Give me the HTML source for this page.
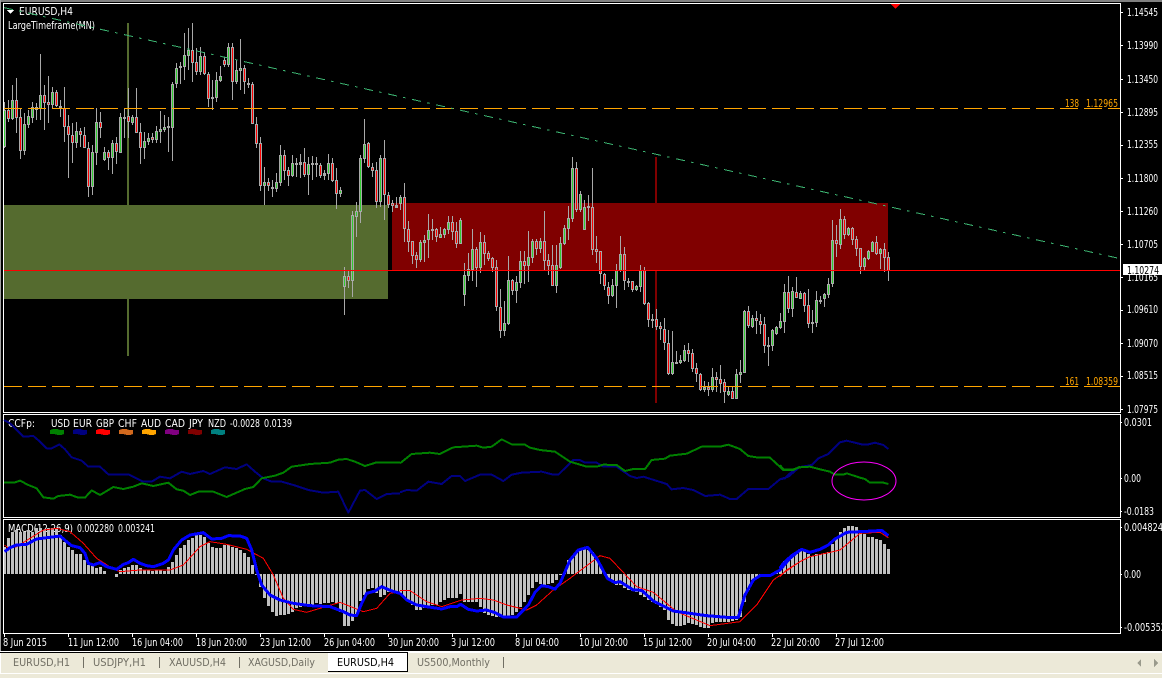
<!DOCTYPE html>
<html><head><meta charset="utf-8"><title>EURUSD,H4</title>
<style>
html,body{margin:0;padding:0;background:#000;width:1162px;height:678px;overflow:hidden}
svg{display:block;position:absolute;left:0;top:0}
text{font-family:"DejaVu Sans","Liberation Sans",sans-serif;font-size:10.5px;fill:#fff}
.o{fill:#FFA500}
.t{fill:#716F64}
.k{fill:#000}
</style></head><body>
<svg width="1162" height="678" viewBox="0 0 1162 678" shape-rendering="crispEdges">
<rect width="1162" height="678" fill="#000"/>
<rect width="1162" height="2" fill="#808080"/>
<rect width="1" height="652" fill="#a0a0a0"/>

<!-- main pane -->
<rect x="4" y="205" width="384" height="94" fill="#556B2F"/>
<rect x="392" y="203" width="496" height="68" fill="#800000"/>
<rect x="127" y="23" width="2" height="333" fill="#556B2F"/>
<rect x="655" y="157" width="2" height="246" fill="#800000"/>
<g id="candles"></g>
<line x1="4" y1="108.5" x2="1120" y2="108.5" stroke="#FFA500" stroke-dasharray="18 6"/>
<line x1="4" y1="386.5" x2="1120" y2="386.5" stroke="#FFA500" stroke-dasharray="18 6"/>
<rect x="4" y="270" width="1116" height="1" fill="#FF0000"/>
<text x="19" y="15" textLength="54" lengthAdjust="spacingAndGlyphs">EURUSD,H4</text>
<text x="8" y="29" textLength="87" lengthAdjust="spacingAndGlyphs">LargeTimeframe(MN)</text>
<polygon points="7,10 14,10 10.5,14" fill="#fff"/>
<line x1="4" y1="7.6" x2="1120" y2="258.6" stroke="#3CB371" stroke-dasharray="9.2 6.1 2.5 6.8"/>
<polygon points="891,4 900,4 895.5,9" fill="#FF0000"/>
<text class="o" x="1065" y="107" textLength="14" lengthAdjust="spacingAndGlyphs">138</text>
<text class="o" x="1086" y="107" textLength="32" lengthAdjust="spacingAndGlyphs">1.12965</text>
<text class="o" x="1065" y="385" textLength="14" lengthAdjust="spacingAndGlyphs">161</text>
<text class="o" x="1086" y="385" textLength="32" lengthAdjust="spacingAndGlyphs">1.08359</text>
<rect x="3.5" y="3.5" width="1117" height="409" fill="none" stroke="#fff"/>

<!-- price axis -->
<path d="M1120 12.5h3M1120 45.5h3M1120 79.5h3M1120 112.5h3M1120 145.5h3M1120 178.5h3M1120 211.5h3M1120 244.5h3M1120 277.5h3M1120 310.5h3M1120 343.5h3M1120 376.5h3M1120 409.5h3" stroke="#fff"/>
<text x="1127" y="16" textLength="31" lengthAdjust="spacingAndGlyphs">1.14545</text>
<text x="1127" y="49" textLength="31" lengthAdjust="spacingAndGlyphs">1.13990</text>
<text x="1127" y="83" textLength="31" lengthAdjust="spacingAndGlyphs">1.13450</text>
<text x="1127" y="116" textLength="31" lengthAdjust="spacingAndGlyphs">1.12895</text>
<text x="1127" y="148" textLength="31" lengthAdjust="spacingAndGlyphs">1.12355</text>
<text x="1127" y="182" textLength="31" lengthAdjust="spacingAndGlyphs">1.11800</text>
<text x="1127" y="215" textLength="31" lengthAdjust="spacingAndGlyphs">1.11260</text>
<text x="1127" y="248" textLength="31" lengthAdjust="spacingAndGlyphs">1.10705</text>
<text x="1127" y="281" textLength="31" lengthAdjust="spacingAndGlyphs">1.10165</text>
<rect x="1123" y="264" width="39" height="11" fill="#fff"/>
<text class="k" x="1127" y="274" textLength="32" lengthAdjust="spacingAndGlyphs">1.10274</text>
<text x="1127" y="313" textLength="31" lengthAdjust="spacingAndGlyphs">1.09610</text>
<text x="1127" y="347" textLength="31" lengthAdjust="spacingAndGlyphs">1.09070</text>
<text x="1127" y="379" textLength="31" lengthAdjust="spacingAndGlyphs">1.08515</text>
<text x="1127" y="413" textLength="31" lengthAdjust="spacingAndGlyphs">1.07975</text>

<!-- CCF pane -->
<rect x="3.5" y="414.5" width="1117" height="103" fill="none" stroke="#fff"/>
<text x="8" y="427" textLength="27" lengthAdjust="spacingAndGlyphs">CCFp:</text>
<text x="51" y="427" textLength="19" lengthAdjust="spacingAndGlyphs">USD</text>
<text x="73" y="427" textLength="19" lengthAdjust="spacingAndGlyphs">EUR</text>
<text x="96" y="427" textLength="18" lengthAdjust="spacingAndGlyphs">GBP</text>
<text x="118" y="427" textLength="19" lengthAdjust="spacingAndGlyphs">CHF</text>
<text x="141" y="427" textLength="20" lengthAdjust="spacingAndGlyphs">AUD</text>
<text x="165" y="427" textLength="20" lengthAdjust="spacingAndGlyphs">CAD</text>
<text x="189" y="427" textLength="14" lengthAdjust="spacingAndGlyphs">JPY</text>
<text x="208" y="427" textLength="18" lengthAdjust="spacingAndGlyphs">NZD</text>
<text x="230" y="427" textLength="30" lengthAdjust="spacingAndGlyphs">-0.0028</text>
<text x="264" y="427" textLength="28" lengthAdjust="spacingAndGlyphs">0.0139</text>
<g stroke="none">
<path d="M50 430l3-1h4l3 1h4v4l-3 1h-3l-4-1h-4z" fill="#008000"/>
<path d="M73 430l3-1h4l3 1h4v4l-3 1h-3l-4-1h-4z" fill="#000080"/>
<path d="M96 430l3-1h4l3 1h4v4l-3 1h-3l-4-1h-4z" fill="#FF0000"/>
<path d="M119 430l3-1h4l3 1h4v4l-3 1h-3l-4-1h-4z" fill="#D2691E"/>
<path d="M142 430l3-1h4l3 1h4v4l-3 1h-3l-4-1h-4z" fill="#FFA500"/>
<path d="M165 430l3-1h4l3 1h4v4l-3 1h-3l-4-1h-4z" fill="#800080"/>
<path d="M188 430l3-1h4l3 1h4v4l-3 1h-3l-4-1h-4z" fill="#800000"/>
<path d="M211 430l3-1h4l3 1h4v4l-3 1h-3l-4-1h-4z" fill="#008080"/>
</g>
<g fill="none" stroke-width="6" stroke-linejoin="round">
<polyline transform="translate(0,410) scale(.33333)" stroke="#000080" points="12,30 30,40 50,60 70,80 100,78 120,95 140,115 155,115 178,103 195,118 215,142 245,152 265,170 300,170 325,193 385,193 430,215 455,215 480,200 510,205 545,185 570,192 610,183 630,192 675,172 710,177 740,163 765,185 790,205 815,215 845,215 880,225 925,240 970,248 1015,245 1045,308 1080,242 1095,240 1130,267 1160,252 1200,250"/>
<polyline transform="translate(400,410) scale(.33333)" stroke="#000080" points="0,247 20,240 50,242 85,215 125,222 155,198 180,198 195,213 240,194 275,194 310,213 335,194 365,188 425,185 460,194 475,194 520,150 540,150 555,158 590,158 610,170 650,170 690,198 710,204 730,200 800,222 815,238 850,234 880,240 915,258 960,254 990,267 1010,267 1045,237 1105,237 1140,208 1165,200 1200,170"/>
<polyline transform="translate(780,410) scale(.33333)" stroke="#000080" points="0,208 15,205 30,190 55,172 95,165 115,145 145,132 180,97 200,92 245,103 265,103 285,98 310,105 325,117"/>
<polyline transform="translate(0,410) scale(.33333)" stroke="#008000" points="12,218 45,217 60,212 85,225 110,235 130,262 160,266 175,258 210,254 235,263 255,263 275,241 300,255 340,231 370,237 400,230 425,220 460,228 505,218 530,238 550,242 570,255 595,245 640,245 680,261 735,237 760,231 785,205 825,197 850,188 875,170 930,162 990,158 1015,149 1040,147 1065,155 1095,168 1130,157 1200,158"/>
<polyline transform="translate(400,410) scale(.33333)" stroke="#008000" points="0,160 35,132 90,128 120,132 160,112 230,107 250,113 275,110 305,88 335,103 375,104 390,113 420,120 465,125 510,155 560,170 590,170 610,164 650,165 675,183 700,177 735,177 755,150 795,146 810,137 860,131 905,110 960,110 985,104 1020,117 1045,138 1075,143 1110,143 1150,180 1180,180 1200,170"/>
<polyline transform="translate(780,410) scale(.33333)" stroke="#008000" points="0,165 10,178 40,178 60,172 90,170 120,178 150,185 165,194 190,194 200,190 240,203 255,207 270,218 310,218 325,222"/>
</g>
<ellipse cx="864" cy="481" rx="32" ry="19" fill="none" stroke="#FF00FF" shape-rendering="auto"/>
<path d="M1120 422.500h2M1120 478.500h2M1120 511.500h2" stroke="#fff"/>
<text x="1124" y="426" textLength="28" lengthAdjust="spacingAndGlyphs">0.0301</text>
<text x="1124" y="482" textLength="17" lengthAdjust="spacingAndGlyphs">0.00</text>
<text x="1124" y="515" textLength="30" lengthAdjust="spacingAndGlyphs">-0.0183</text>

<!-- MACD pane -->
<text x="8" y="532" textLength="65" lengthAdjust="spacingAndGlyphs">MACD(12,26,9)</text>
<text x="77" y="532" textLength="37" lengthAdjust="spacingAndGlyphs">0.002280</text>
<text x="118" y="532" textLength="37" lengthAdjust="spacingAndGlyphs">0.003241</text>
<g id="bars"></g>
<g fill="none" stroke-linejoin="round">
<g stroke="#FF0000" stroke-width="3">
<polyline transform="translate(0,515) scale(.33333)" points="14,90 25,100 50,95 90,70 130,45 170,40 210,50 250,85 290,130 340,162 360,170 420,165 510,165 550,150 600,95 630,80 680,88 740,103 790,130 820,180 850,250 880,283 920,292 960,280 1020,262 1060,278 1090,290 1130,280 1170,235 1200,230"/>
<polyline transform="translate(400,515) scale(.33333)" points="0,227 30,227 80,260 125,275 185,255 240,250 280,255 320,270 380,285 410,270 460,225 510,190 600,122 630,130 710,215 760,232 830,290 930,332 1020,320 1070,270 1120,195 1200,140"/>
<polyline transform="translate(780,515) scale(.33333)" points="0,185 20,165 60,140 90,125 150,112 180,105 240,55 300,52 325,68"/>
</g>
<g stroke="#0000FF" stroke-width="9">
<polyline transform="translate(0,515) scale(.33333)" points="14,110 30,98 50,90 80,88 110,72 140,68 180,63 200,80 215,92 240,98 255,115 265,145 280,150 300,143 320,155 350,163 370,148 385,143 400,133 420,145 440,152 460,155 490,145 505,135 520,105 545,75 570,60 610,53 635,72 665,70 685,62 720,63 740,70 755,105 770,165 785,210 810,240 840,255 880,265 930,272 990,275 1030,290 1050,300 1070,302 1085,265 1100,235 1125,228 1145,215 1175,228 1200,235"/>
<polyline transform="translate(400,515) scale(.33333)" points="0,235 20,255 50,270 80,275 125,282 150,275 170,275 182,268 205,283 230,288 260,285 285,293 310,306 350,306 385,270 405,232 425,212 445,215 465,222 480,205 510,135 535,105 563,97 590,130 622,190 645,203 660,200 700,225 725,226 760,258 820,288 870,295 920,302 980,307 1015,307 1035,240 1060,195 1080,182 1110,182 1140,165 1170,130 1200,105"/>
<polyline transform="translate(780,515) scale(.33333)" points="0,160 10,145 35,122 65,103 90,112 120,103 145,90 165,72 200,52 240,50 280,48 305,46 325,62"/>
</g>
</g>
<rect x="3.5" y="519.5" width="1117" height="114" fill="none" stroke="#fff"/>
<path d="M1120 527.500h2M1120 574.500h2M1120 627.500h2" stroke="#fff"/>
<text x="1124" y="531" textLength="39" lengthAdjust="spacingAndGlyphs">0.004824</text>
<text x="1124" y="578" textLength="17" lengthAdjust="spacingAndGlyphs">0.00</text>
<text x="1124" y="631" textLength="42" lengthAdjust="spacingAndGlyphs">-0.005352</text>

<!-- time axis -->
<path d="M4.500 634v3M68.500 634v3M132.500 634v3M196.500 634v3M260.500 634v3M324.500 634v3M388.500 634v3M452.500 634v3M516.500 634v3M580.500 634v3M644.500 634v3M708.500 634v3M772.500 634v3M836.500 634v3" stroke="#fff"/>
<text x="3" y="646" textLength="44" lengthAdjust="spacingAndGlyphs">8 Jun 2015</text>
<text x="68" y="646" textLength="51" lengthAdjust="spacingAndGlyphs">11 Jun 12:00</text>
<text x="132" y="646" textLength="51" lengthAdjust="spacingAndGlyphs">16 Jun 04:00</text>
<text x="196" y="646" textLength="51" lengthAdjust="spacingAndGlyphs">18 Jun 20:00</text>
<text x="260" y="646" textLength="51" lengthAdjust="spacingAndGlyphs">23 Jun 12:00</text>
<text x="324" y="646" textLength="51" lengthAdjust="spacingAndGlyphs">26 Jun 04:00</text>
<text x="388" y="646" textLength="51" lengthAdjust="spacingAndGlyphs">30 Jun 20:00</text>
<text x="451" y="646" textLength="44" lengthAdjust="spacingAndGlyphs">3 Jul 12:00</text>
<text x="515" y="646" textLength="44" lengthAdjust="spacingAndGlyphs">8 Jul 04:00</text>
<text x="579" y="646" textLength="49" lengthAdjust="spacingAndGlyphs">10 Jul 20:00</text>
<text x="643" y="646" textLength="49" lengthAdjust="spacingAndGlyphs">15 Jul 12:00</text>
<text x="707" y="646" textLength="49" lengthAdjust="spacingAndGlyphs">20 Jul 04:00</text>
<text x="771" y="646" textLength="49" lengthAdjust="spacingAndGlyphs">22 Jul 20:00</text>
<text x="835" y="646" textLength="49" lengthAdjust="spacingAndGlyphs">27 Jul 12:00</text>

<!-- tab bar -->
<rect x="0" y="651" width="1162" height="27" fill="#ECE9D8"/>
<rect x="0" y="651" width="1162" height="2" fill="#fff"/>
<rect x="0" y="652" width="328" height="1" fill="#000"/>
<rect x="0" y="653" width="1" height="20" fill="#fff"/>
<rect x="0" y="673" width="1162" height="1" fill="#fff"/>
<rect x="328" y="652" width="80" height="20" fill="#000"/>
<rect x="328" y="653" width="79" height="18" fill="#fff"/>
<path d="M83.500 657v11M159.500 657v11M239.500 657v11M503.500 657v11" stroke="#716F64"/>
<text class="t" x="13" y="666" textLength="57" lengthAdjust="spacingAndGlyphs">EURUSD,H1</text>
<text class="t" x="93" y="666" textLength="53" lengthAdjust="spacingAndGlyphs">USDJPY,H1</text>
<text class="t" x="169" y="666" textLength="57" lengthAdjust="spacingAndGlyphs">XAUUSD,H4</text>
<text class="t" x="248" y="666" textLength="67" lengthAdjust="spacingAndGlyphs">XAGUSD,Daily</text>
<text class="k" x="337" y="666" textLength="57" lengthAdjust="spacingAndGlyphs">EURUSD,H4</text>
<text class="t" x="417" y="666" textLength="73" lengthAdjust="spacingAndGlyphs">US500,Monthly</text>
<polygon points="1141,659 1141,667 1137,663" fill="#9a9a8c"/>
<polygon points="1154,659 1154,667 1158,663" fill="#9a9a8c"/>
</svg>
<script>
(function(){
var d="4 102 148 110 147 g|8 100 122 110 119 r|12 85 120 100 119 g|16 78 133 100 118 r|20 108 159 117 151 r|24 113 155 124 151 g|28 110 128 116 125 g|32 102 123 107 118 g|36 103 120 107 110 r|40 54 120 95 109 g|44 85 130 95 103 r|48 76 123 102 105 r|52 87 108 92 105 g|56 90 107 92 106 r|60 100 117 106 107 n|64 87 142 108 127 r|68 115 178 126 135 r|72 123 163 135 143 r|76 122 148 131 143 g|80 128 147 131 135 r|84 127 148 135 148 r|88 142 197 148 187 r|92 145 195 152 187 g|96 108 165 122 153 g|100 112 138 122 128 r|104 147 161 152 160 g|108 150 170 152 158 r|112 140 174 143 158 g|116 137 164 143 152 r|120 113 153 117 153 g|124 108 138 117 118 n|128 88 138 116 122 r|132 115 125 117 123 g|136 88 133 117 133 r|140 123 164 132 148 r|144 132 159 141 148 g|148 133 145 138 142 g|152 133 143 137 140 r|156 126 143 131 140 g|160 111 143 129 132 g|164 115 132 127 130 g|168 117 152 126 128 g|172 82 161 84 128 g|176 63 88 68 84 g|180 62 84 66 68 g|184 33 80 55 67 g|188 28 70 50 56 g|192 23 82 50 63 r|196 48 75 62 72 r|200 47 75 56 72 g|204 52 75 56 74 r|208 72 107 74 99 r|212 80 110 97 99 n|216 72 102 80 98 g|220 66 82 76 81 g|224 57 67 60 65 r|228 43 67 47 65 g|232 43 100 47 82 r|236 60 84 70 82 g|240 39 90 68 71 g|244 65 94 68 82 r|248 78 88 83 84 n|252 82 124 84 124 r|256 117 148 124 144 r|260 137 191 143 186 r|264 167 205 182 186 g|268 178 191 182 186 r|272 180 197 187 189 n|276 173 192 182 189 g|280 145 186 155 183 g|284 150 180 155 171 r|288 167 186 170 176 r|292 155 177 163 176 g|296 158 177 163 164 n|300 154 178 162 165 n|304 148 177 162 175 r|308 157 195 164 175 g|312 156 180 163 164 n|316 157 177 163 164 n|320 163 178 165 176 r|324 170 180 173 176 n|328 154 180 163 174 g|332 158 182 163 181 r|336 168 209 180 194 r|340 187 197 190 194 g|344 267 315 276 287 g|348 271 288 276 281 r|352 211 297 215 281 g|356 202 237 211 217 g|360 155 223 158 212 g|364 119 163 144 159 g|368 142 168 143 167 r|372 163 177 167 171 r|376 162 208 170 202 r|380 155 207 158 202 g|384 140 220 158 195 r|388 192 208 195 205 r|392 200 212 203 206 r|396 197 208 205 208 n|400 195 210 197 204 g|404 183 242 197 229 r|408 221 252 229 242 r|412 241 264 241 256 r|416 252 268 255 260 r|420 240 262 242 260 g|424 235 262 240 243 g|428 214 258 230 240 g|432 219 240 229 231 n|436 228 242 229 237 r|440 227 238 234 238 g|444 228 238 229 235 g|448 216 234 222 230 g|452 216 240 222 232 r|456 222 248 231 244 r|460 218 244 220 244 g|464 263 306 275 295 g|468 253 281 269 276 g|472 229 281 249 270 g|476 247 287 249 268 r|480 232 273 242 268 g|484 235 265 242 254 r|488 251 261 253 259 r|492 257 272 258 268 r|496 260 311 267 307 r|500 289 338 307 331 r|504 301 336 323 331 g|508 256 325 280 324 g|512 279 295 280 291 r|516 276 303 282 291 g|520 251 288 261 283 g|524 251 284 261 266 r|528 231 282 257 266 g|532 239 263 241 258 g|536 239 255 241 249 r|540 238 253 241 249 g|544 211 271 241 261 r|548 254 275 260 266 r|552 245 286 265 286 r|556 245 293 265 286 g|560 237 269 243 268 g|564 225 245 228 244 g|568 206 240 218 229 g|572 157 222 168 219 g|576 162 212 168 210 r|580 191 212 194 210 g|584 200 230 207 230 g|588 195 221 206 207 n|592 168 255 207 250 r|596 236 263 249 252 r|600 251 284 251 274 r|604 273 290 274 286 r|608 282 304 287 296 r|612 279 297 285 296 g|616 264 308 270 286 g|620 236 272 254 271 g|624 247 290 254 281 r|628 278 287 281 283 n|632 281 292 281 290 r|636 285 291 286 290 g|640 265 292 270 287 g|644 267 305 270 304 r|648 302 327 303 320 r|652 314 328 319 320 n|656 309 330 319 327 r|660 322 340 326 329 r|664 318 350 329 343 r|668 330 375 343 374 r|672 331 375 362 374 g|676 351 364 362 363 n|680 355 364 360 363 g|684 345 362 350 361 g|688 343 362 350 354 r|692 349 372 353 369 r|696 363 382 368 374 r|700 373 391 374 390 r|704 381 392 387 390 g|708 382 396 387 390 r|712 368 392 377 390 g|716 372 392 377 380 r|720 365 393 379 384 r|724 379 403 382 392 r|728 387 396 391 395 g|732 387 399 391 399 r|736 369 399 374 399 g|740 360 383 372 375 g|744 310 373 311 373 g|748 306 328 311 326 r|752 315 328 318 327 g|756 311 334 318 321 r|760 314 334 321 325 r|764 317 353 324 346 r|768 337 366 345 346 n|772 329 351 330 346 g|776 326 335 327 334 g|780 313 329 321 328 g|784 284 333 292 322 g|788 276 313 292 309 r|792 287 317 291 309 g|796 277 298 292 298 r|800 291 299 293 299 g|804 292 312 293 306 r|808 289 328 305 324 r|812 310 333 322 324 n|816 291 327 300 323 g|820 296 304 300 301 n|824 293 307 294 299 g|828 278 298 284 295 g|832 220 287 240 284 g|836 225 257 240 244 r|840 209 249 219 245 g|844 216 239 219 235 r|848 227 236 228 235 g|852 227 245 228 240 r|856 236 256 239 249 r|860 248 274 248 267 r|864 257 270 258 267 g|868 250 260 251 259 g|872 241 252 242 252 g|876 236 255 242 254 r|880 248 269 249 254 g|884 243 272 249 258 r|888 252 281 257 271 r".split("|");
var w="",b="",g="",r="";
d.forEach(function(s){
 var a=s.split(" "),x=+a[0],h=+a[1],l=+a[2],t=+a[3],e=+a[4],c=a[5];
 if(e-t<2)e=t+2;
 w+="M"+(x+.5)+" "+h+"V"+l;
 b+="M"+(x-1)+" "+t+"h3V"+e+"h-3z";
 var p="M"+x+" "+(t+1)+"h1V"+(e-1)+"h-1z";
 if(c=="g")g+=p; else if(c=="r")r+=p;
});
document.getElementById("candles").innerHTML=
 '<path d="'+w+'" stroke="#A9A9A9" fill="none"/><path d="'+b+'" fill="#A9A9A9"/><path d="'+g+'" fill="#32CD32"/><path d="'+r+'" fill="#FF0000"/>';
var S=[[4,[95,68,50,45,50,50,45,50,40,40,45,40,40,43,60,80,95,105,118,118,135,150,150,160,155,168,178,178,185,165,158,155,150,150,160,165,165,168,165,165,168,155,140,120,100,90,75,68,60,60,65,85,95,100,100,90,90,95,100,105,115,125,150,180]],
[260,[215,248,272,290,302,300,300,298,290,280,275,270,270,270,265,268,265,265,262,265,290,332,332,318,300,258,240,222,220,235,245,240,232,232,235]],
[400,[235,250,255,270,285,285,280,275,270,270,260,255,250,250,250,237,260,262,262,262,275,295,300,302,305,305,305,305,300,290,275,262,240,218,202,207,212,207,205,195,180]],
[564,[172,135,122,115,105,100,105,112,125,150,175]],
[608,[190,200,210,210,220,225,228,232,240,245,255,262,268,275,285,315,328,332,332,330,325,328,330,335,338,338,325,322,322,320,320,318,315,305,260,225,195,185,180,178]],
[768,[176,176,170,165]],
[784,[138,128,118,112,108,108,118,122,118,118,115,112,88,72,50,40,34,33,37,50,58,66,66,72,76,88,102]]];
var m="";
S.forEach(function(q){q[1].forEach(function(z,i){
 var x=q[0]+4*i,y=Math.round(515+z/3);
 if(y<574)m+="M"+(x-1)+" "+y+"h3V574h-3z"; else if(y>574)m+="M"+(x-1)+" 574h3V"+y+"h-3z";
});});
document.getElementById("bars").innerHTML='<path d="'+m+'" fill="#C0C0C0"/>';
})();
</script>
</body></html>
